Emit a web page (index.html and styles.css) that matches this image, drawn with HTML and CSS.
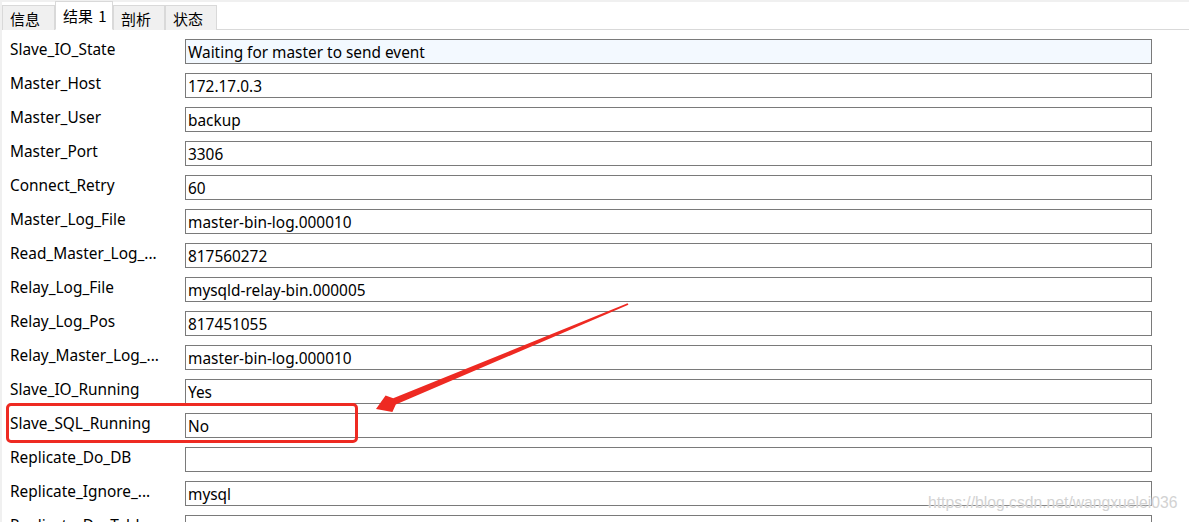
FILE: index.html
```html
<!DOCTYPE html>
<html lang="zh">
<head>
<meta charset="utf-8">
<link rel="stylesheet" href="styles.css">
</head>
<body>
<div class="page">
  <div class="tabbar">
    <div class="tab">信息</div>
    <div class="tab active">结果 1</div>
    <div class="tab">剖析</div>
    <div class="tab">状态</div>
  </div>
  <div class="form">
    <div class="row"><div class="label">Slave_IO_State</div><div class="box sel">Waiting for master to send event</div></div>
    <div class="row"><div class="label">Master_Host</div><div class="box">172.17.0.3</div></div>
    <div class="row"><div class="label">Master_User</div><div class="box">backup</div></div>
    <div class="row"><div class="label">Master_Port</div><div class="box">3306</div></div>
    <div class="row"><div class="label">Connect_Retry</div><div class="box">60</div></div>
    <div class="row"><div class="label">Master_Log_File</div><div class="box">master-bin-log.000010</div></div>
    <div class="row"><div class="label">Read_Master_Log_...</div><div class="box">817560272</div></div>
    <div class="row"><div class="label">Relay_Log_File</div><div class="box">mysqld-relay-bin.000005</div></div>
    <div class="row"><div class="label">Relay_Log_Pos</div><div class="box">817451055</div></div>
    <div class="row"><div class="label">Relay_Master_Log_...</div><div class="box">master-bin-log.000010</div></div>
    <div class="row"><div class="label">Slave_IO_Running</div><div class="box">Yes</div></div>
    <div class="row"><div class="label">Slave_SQL_Running</div><div class="box">No</div></div>
    <div class="row"><div class="label">Replicate_Do_DB</div><div class="box"></div></div>
    <div class="row"><div class="label">Replicate_Ignore_...</div><div class="box">mysql</div></div>
    <div class="row"><div class="label">Replicate_Do_Table</div><div class="box"></div></div>
  </div>
  <div class="highlight"></div>
  <svg class="arrow" width="1189" height="522" viewBox="0 0 1189 522">
    <polygon fill="#ee2a22" points="376,409 392.4,412 395.8,404.6 628.4,304.7 627.6,303.3 393.2,398.2 385.6,395.4"/>
  </svg>
  <div class="watermark">https://blog.csdn.net/wangxuelei036</div>
</div>
</body>
</html>
```

FILE: styles.css
```css
html, body {
  margin: 0;
  padding: 0;
  background: #ffffff;
}
.page {
  position: relative;
  width: 1189px;
  height: 522px;
  overflow: hidden;
  box-sizing: border-box;
  border-left: 2px solid #f0f0f0;
  font-family: "Noto Sans", "Noto Sans CJK SC", sans-serif;
  font-size: 15.4px;
  color: #000;
}
.tabbar {
  display: flex;
  align-items: flex-end;
  height: 30px;
  box-sizing: border-box;
  border-top: 2px solid #f0f0f0;
  border-bottom: 1px solid #d9d9d9;
  background: #fff;
}
.tab {
  height: 25px;
  box-sizing: border-box;
  padding: 0 7px;
  background: #f0f0f0;
  border: 1px solid #d9d9d9;
  border-bottom: none;
  margin-bottom: -1px;
  line-height: 25px;
  font-family: "Noto Sans CJK SC", sans-serif;
  font-size: 15px;
  white-space: nowrap;
}
.tab:first-child { width: 53px; }
.tab.active {
  width: 58px;
  height: 29px;
  background: #fff;
  line-height: 27px;
  margin-bottom: -1px;
  border-bottom: 1px solid #fff;
  word-spacing: 2px;
}
.tab:nth-child(3), .tab:nth-child(4) { width: 52px; }
.form {
  display: flex;
  flex-direction: column;
}
.row {
  display: grid;
  grid-template-columns: 183px 967px;
  height: 34px;
}
.label {
  padding-left: 8px;
  padding-top: 10px;
  line-height: 20px;
  white-space: nowrap;
}
.box {
  margin-top: 9px;
  height: 25px;
  box-sizing: border-box;
  border: 1px solid #7a7a7a;
  padding: 1px 3px 0 2px;
  line-height: 23px;
  white-space: nowrap;
}
.box.sel { background: #f3f9ff; }
.highlight {
  position: absolute;
  left: 4px;
  top: 403px;
  width: 352px;
  height: 40px;
  box-sizing: border-box;
  border: 3px solid #ee2a22;
  border-radius: 5px;
}
.arrow {
  position: absolute;
  left: -2px;
  top: 0;
}
.watermark {
  position: absolute;
  left: 926px;
  top: 494px;
  font-family: "Liberation Sans", Arial, sans-serif;
  font-size: 15.7px;
  color: #d2d2d2;
  text-shadow: 0 0 2px #fff;
  white-space: nowrap;
}
```
